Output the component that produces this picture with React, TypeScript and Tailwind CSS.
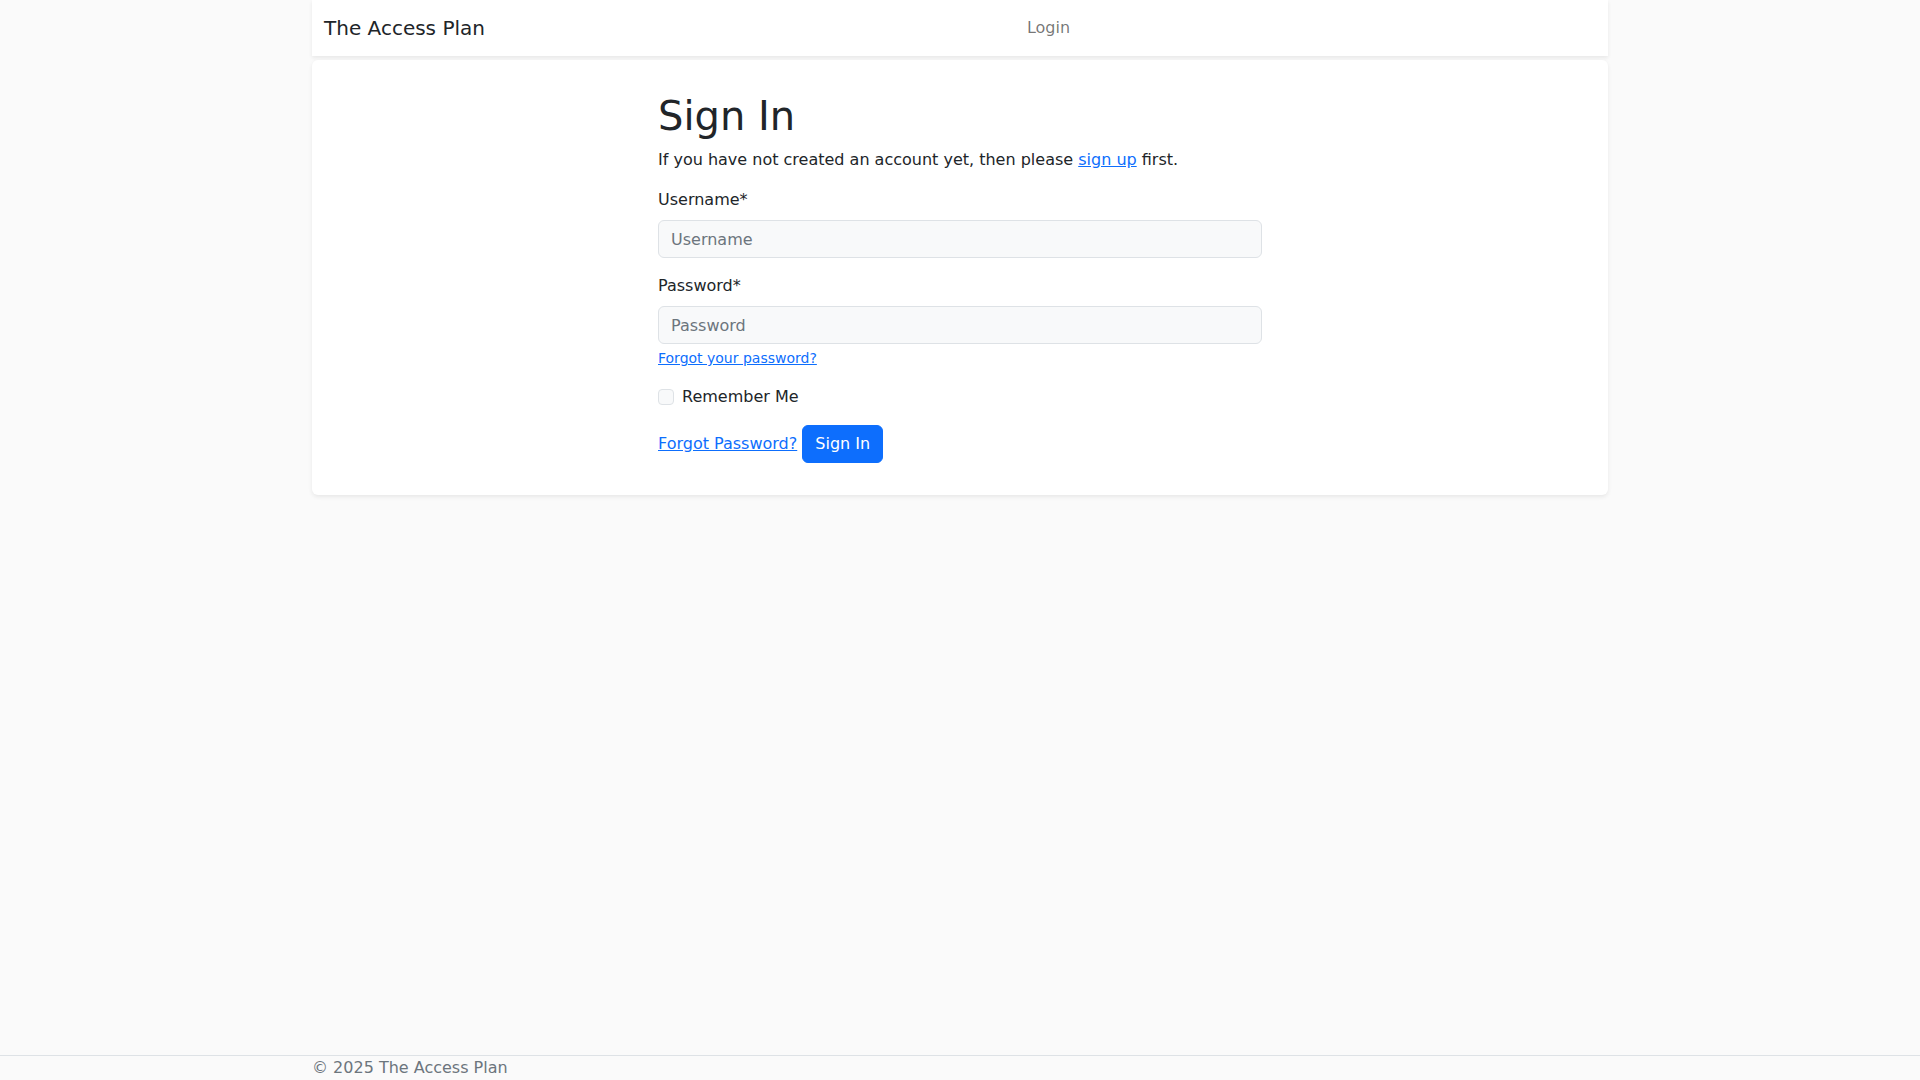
import React from "react";

export default function App() {
  return (
    <div className="min-h-screen flex flex-col bg-[#fafafa] text-[#212529] font-['DejaVu_Sans',sans-serif] text-base leading-6">
      <main className="flex-1 w-[1296px] mx-auto">
        <nav className="h-14 bg-white shadow-[0_2px_4px_rgba(0,0,0,0.075)] flex items-center px-3">
          <a href="#" className="text-xl leading-[30px] py-[5px] mr-4 text-[#212529] whitespace-nowrap">
            The Access Plan
          </a>
          <div className="flex-1 flex justify-center">
            <a href="#" className="px-2 py-2 text-[rgba(0,0,0,0.55)]">
              Login
            </a>
          </div>
        </nav>

        <div className="mt-1 bg-white rounded-md shadow-[0_2px_4px_rgba(0,0,0,0.075)] pt-8 pb-8 flex justify-center">
          <div className="w-[604px]">
            <h1 className="text-[40px] leading-[48px] font-normal mb-2">Sign In</h1>
            <p className="mb-4">
              If you have not created an account yet, then please{" "}
              <a href="#" className="text-[#0d6efd] underline">
                sign up
              </a>{" "}
              first.
            </p>

            <div className="mb-4">
              <label className="block mb-2">Username*</label>
              <input
                type="text"
                placeholder="Username"
                className="block w-full h-[38px] px-3 border border-[#dee2e6] rounded-md bg-[#f8f9fa] text-base text-[#212529] placeholder:text-[#6c757d] outline-none"
              />
            </div>

            <div className="mb-4">
              <label className="block mb-2">Password*</label>
              <input
                type="password"
                placeholder="Password"
                className="block w-full h-[38px] px-3 border border-[#dee2e6] rounded-md bg-[#f8f9fa] text-base text-[#212529] placeholder:text-[#6c757d] outline-none"
              />
              <div className="mt-1 text-sm leading-[21px]">
                <a href="#" className="text-[#0d6efd] underline">
                  Forgot your password?
                </a>
              </div>
            </div>

            <div className="mb-4 flex items-start">
              <input
                type="checkbox"
                className="appearance-none w-4 h-4 mt-1 border border-[#dee2e6] rounded-[4px] bg-[#f8f9fa] shrink-0"
              />
              <label className="ml-2">Remember Me</label>
            </div>

            <div>
              <a href="#" className="text-[#0d6efd] underline">
                Forgot Password?
              </a>{" "}
              <button className="inline-block px-3 py-1.5 border border-[#0d6efd] bg-[#0d6efd] text-white rounded-md leading-6">
                Sign In
              </button>
            </div>
          </div>
        </div>
      </main>

      <footer className="border-t border-[#dee2e6]">
        <div className="w-[1296px] mx-auto text-[#6c757d] leading-6">© 2025 The Access Plan</div>
      </footer>
    </div>
  );
}
